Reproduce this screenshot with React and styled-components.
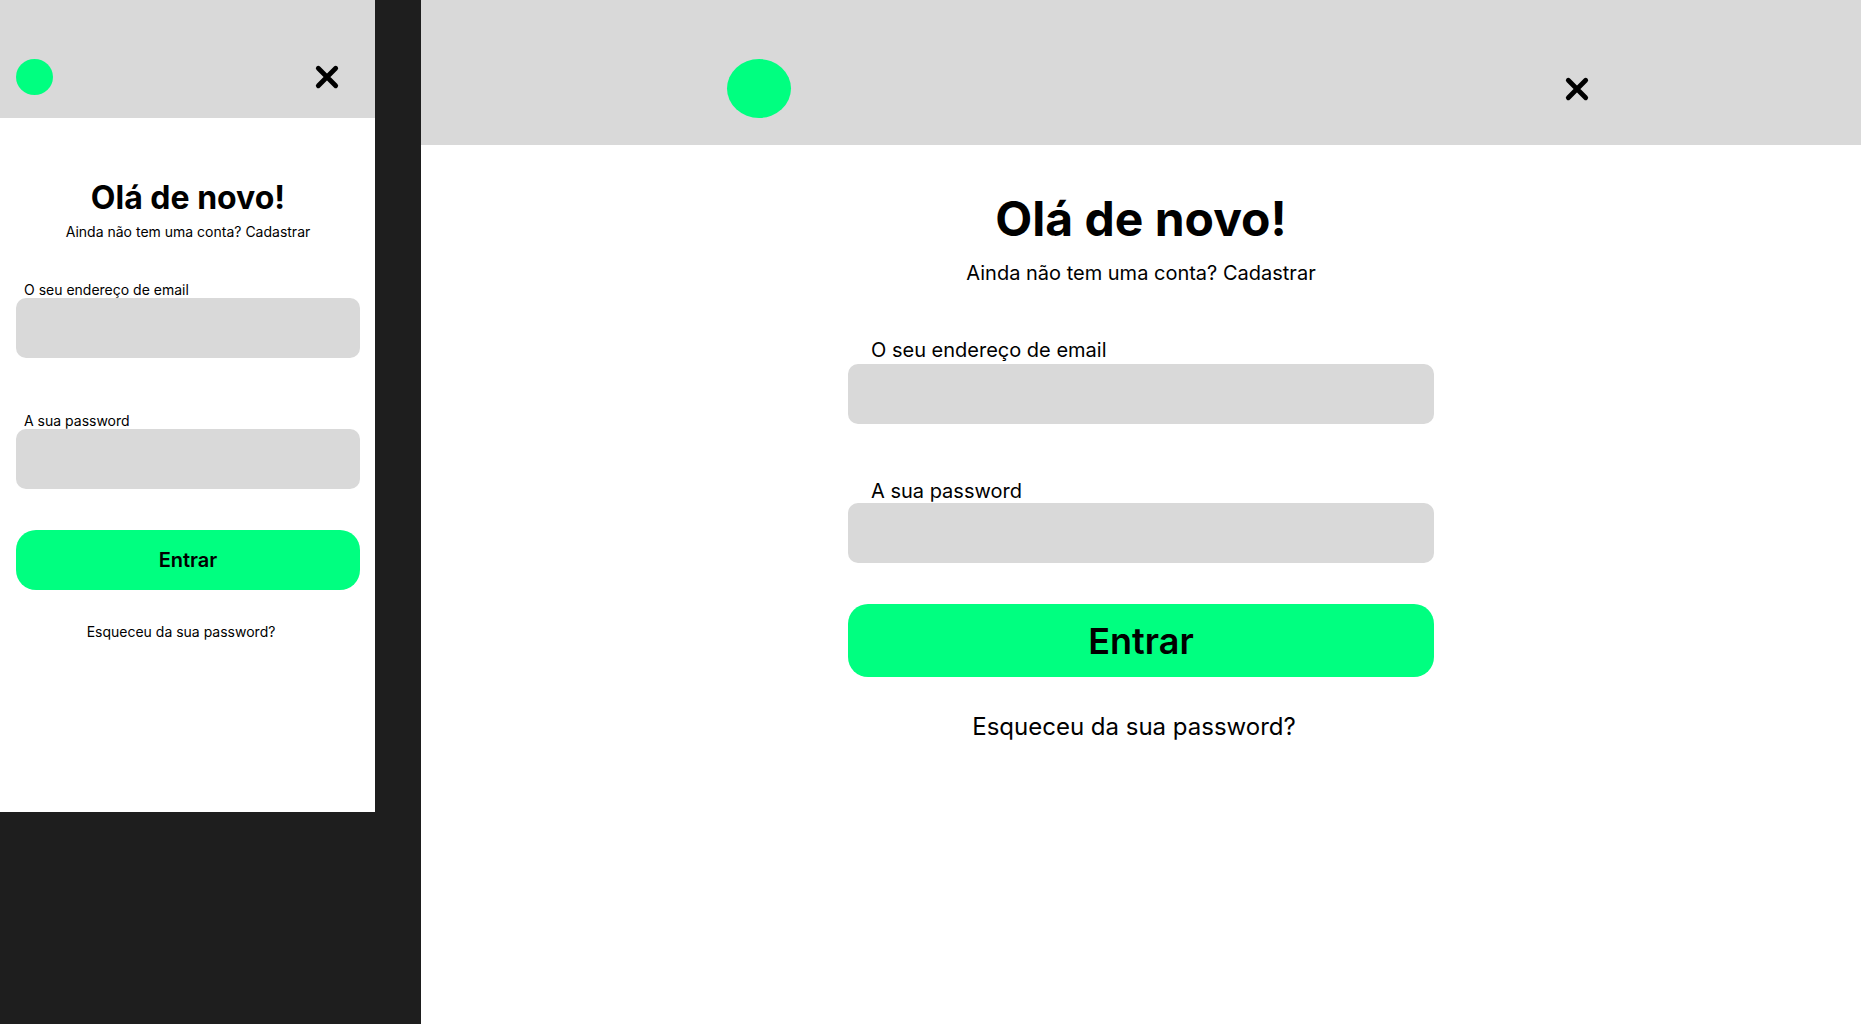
import React, { useId } from "react";
import styled, { createGlobalStyle, ThemeProvider } from "styled-components";

const GlobalStyle = createGlobalStyle`
  *, *::before, *::after { box-sizing: border-box; }
  body {
    margin: 0;
    background: #1e1e1e;
    color: #000;
    font-family: Inter, "Liberation Sans", sans-serif;
  }
`;

const mobile = {
  header: "59px 32px 23px 16px",
  logoWidth: 37,
  logoHeight: 36,
  main: "60px 15px 0 16px",
  column: "none",
  title: "700 32px/40px",
  titleGap: 5,
  text: "400 14px/17px",
  introGap: 41,
  labelInset: 8,
  fieldGap: 54,
  button: "600 20px/24px",
  buttonHeight: 60,
  link: "400 14px/17px",
  linkGap: 33,
};

const desktop = {
  header: "59px 268px 27px 306px",
  logoWidth: 64,
  logoHeight: 59,
  main: "45px 16px 0",
  column: "586px",
  title: "700 48px/58px",
  titleGap: 13,
  text: "400 20px/24px",
  introGap: 53,
  labelInset: 23,
  fieldGap: 55,
  button: "600 36px/44px",
  buttonHeight: 73,
  link: "400 24px/30px",
  linkGap: 35,
};

const fontFamily = `Inter, "Liberation Sans", sans-serif`;

const Board = styled.div`
  display: flex;
  align-items: flex-start;
  gap: 46px;
  min-height: 100vh;
`;

const PhoneFrame = styled.section`
  flex: 0 0 375px;
  min-height: 812px;
  background: #fff;
`;

const DesktopFrame = styled.section`
  flex: 1;
  align-self: stretch;
  background: #fff;
`;

const Header = styled.header`
  display: flex;
  align-items: center;
  justify-content: space-between;
  padding: ${({ theme }) => theme.header};
  background: #d9d9d9;
`;

const Logo = styled.div`
  width: ${({ theme }) => theme.logoWidth}px;
  height: ${({ theme }) => theme.logoHeight}px;
  border-radius: 50%;
  background: #00ff80;
`;

const CloseButton = styled.button`
  display: flex;
  padding: 0;
  border: 0;
  background: none;
  color: #000;
  cursor: pointer;
`;

const Main = styled.main`
  display: flex;
  justify-content: center;
  padding: ${({ theme }) => theme.main};
`;

const Column = styled.div`
  flex: 1;
  max-width: ${({ theme }) => theme.column};
  text-align: center;
`;

const Title = styled.h1`
  margin: 0 0 ${({ theme }) => theme.titleGap}px;
  font: ${({ theme }) => theme.title} ${fontFamily};
`;

const Intro = styled.p`
  margin: 0 0 ${({ theme }) => theme.introGap}px;
  font: ${({ theme }) => theme.text} ${fontFamily};
`;

const Link = styled.a`
  color: inherit;
  text-decoration: none;
`;

const Form = styled.form`
  display: flex;
  flex-direction: column;
`;

const Fields = styled.div`
  display: grid;
  gap: ${({ theme }) => theme.fieldGap}px;
  margin-bottom: 41px;
`;

const FieldBox = styled.div`
  display: flex;
  flex-direction: column;
  gap: ${({ $gap }) => $gap}px;
  text-align: left;
`;

const Label = styled.label`
  padding-left: ${({ theme }) => theme.labelInset}px;
  font: ${({ theme }) => theme.text} ${fontFamily};
`;

const Input = styled.input`
  width: 100%;
  height: 60px;
  padding: 0 ${({ theme }) => theme.labelInset}px;
  border: 0;
  border-radius: 10px;
  background: #d9d9d9;
  font: ${({ theme }) => theme.text} ${fontFamily};
`;

const SubmitButton = styled.button`
  height: ${({ theme }) => theme.buttonHeight}px;
  padding: 0;
  border: 0;
  border-radius: 20px;
  background: #00ff80;
  color: #000;
  font: ${({ theme }) => theme.button} ${fontFamily};
  cursor: pointer;
`;

const Forgot = styled.p`
  margin: ${({ theme }) => theme.linkGap}px 0 0;
  padding-right: 14px;
  font: ${({ theme }) => theme.link} ${fontFamily};
`;

function Field({ label, type, gap = 0 }) {
  const id = useId();
  return (
    <FieldBox $gap={gap}>
      <Label htmlFor={id}>{label}</Label>
      <Input id={id} type={type} />
    </FieldBox>
  );
}

function Login({ emailGap }) {
  return (
    <>
      <Header>
        <Logo />
        <CloseButton type="button" aria-label="Fechar">
          <svg width="32" height="32" viewBox="0 0 32 32" fill="none" aria-hidden="true">
            <path d="M7.3 7.3L24.7 24.7M24.7 7.3L7.3 24.7" stroke="currentColor" strokeWidth="4.8" strokeLinecap="round" />
          </svg>
        </CloseButton>
      </Header>
      <Main>
        <Column>
          <Title>Olá de novo!</Title>
          <Intro>
            Ainda não tem uma conta? <Link href="#cadastrar">Cadastrar</Link>
          </Intro>
          <Form onSubmit={(event) => event.preventDefault()}>
            <Fields>
              <Field label="O seu endereço de email" type="email" gap={emailGap} />
              <Field label="A sua password" type="password" />
            </Fields>
            <SubmitButton type="submit">Entrar</SubmitButton>
          </Form>
          <Forgot>
            <Link href="#recuperar">Esqueceu da sua password?</Link>
          </Forgot>
        </Column>
      </Main>
    </>
  );
}

export default function App() {
  return (
    <>
      <GlobalStyle />
      <Board>
        <ThemeProvider theme={mobile}>
          <PhoneFrame>
            <Login />
          </PhoneFrame>
        </ThemeProvider>
        <ThemeProvider theme={desktop}>
          <DesktopFrame>
            <Login emailGap={2} />
          </DesktopFrame>
        </ThemeProvider>
      </Board>
    </>
  );
}
